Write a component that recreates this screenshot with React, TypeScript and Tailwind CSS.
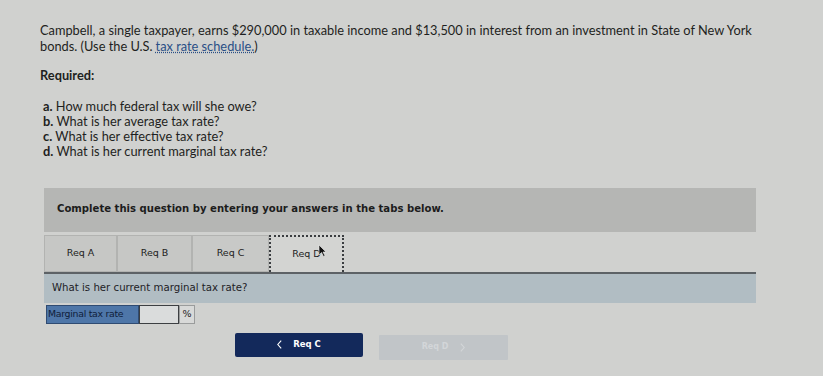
import React from "react";

export default function App() {
  return (
    <div className="w-[823px] h-[376px] overflow-hidden bg-[#d0d1cf] relative" style={{ fontFamily: "Lato, 'Open Sans', sans-serif" }}>
      <div className="pl-[40px] pt-[23px] text-[12.8px] leading-[15.5px] text-[#1e1f21] w-[770px]">
        <div>Campbell, a single taxpayer, earns $290,000 in taxable income and $13,500 in interest from an investment in State of New York</div>
        <div className="flex gap-[3px]">
          <span>bonds. (Use the U.S.</span>
          <span><span className="text-[#2a4f86] underline decoration-dotted underline-offset-1">tax rate schedule.</span>)</span>
        </div>
        <p className="font-bold mt-[14px]">Required:</p>
        <ul className="mt-[15px] leading-[15px] pl-[3px]">
          <li><b>a.</b> How much federal tax will she owe?</li>
          <li><b>b.</b> What is her average tax rate?</li>
          <li><b>c.</b> What is her effective tax rate?</li>
          <li><b>d.</b> What is her current marginal tax rate?</li>
        </ul>
      </div>

      <div className="ml-[44px] mt-[29px] w-[712px]" style={{ fontFamily: "'DejaVu Sans', Verdana, sans-serif" }}>
        <div className="bg-[#b5b6b4] h-[44px] flex items-center pl-[13px] pb-[1px]">
          <span className="font-bold text-[10.1px] text-[#1c1c1c]">Complete this question by entering your answers in the tabs below.</span>
        </div>
        <div className="flex mt-[3px] h-[39px] border-b-2 border-[#5d6266]">
          <div className="w-[73px] bg-[#c6c7c5] border border-[#b2b3b1] flex items-center justify-center text-[9.5px] text-[#222]">Req A</div>
          <div className="w-[75px] bg-[#c6c7c5] border border-[#b2b3b1] flex items-center justify-center text-[9.5px] text-[#222]">Req B</div>
          <div className="w-[77px] bg-[#c8c9c7] border border-[#b2b3b1] flex items-center justify-center text-[9.5px] text-[#222]">Req C</div>
          <div className="w-[75px] bg-[#d3d4d2] border-2 border-dotted border-[#3a3d40] border-b-0 flex items-center justify-center text-[9.5px] text-[#222] relative">
            Req D
            <svg className="absolute left-[47px] top-[7px]" width="9" height="13" viewBox="0 0 9 13">
              <path d="M1 1 L1 11 L3.5 8.5 L5.5 12.5 L7 11.8 L5 8 L8 8 Z" fill="#111" stroke="#eee" strokeWidth="0.6" />
            </svg>
          </div>
        </div>
        <div className="bg-[#b1bdc3] h-[29px] flex items-center pl-[8px] text-[10.2px] text-[#1e2226]">
          What is her current marginal tax rate?
        </div>
        <div className="flex mt-[2px] ml-[2px] h-[19px] text-[9.4px]">
          <div className="w-[93px] bg-[#4e76a8] border border-[#2f4b72] flex items-center pl-[1px] text-[#10203a] tracking-[-0.3px]">Marginal tax rate</div>
          <div className="w-[40px] bg-[#dadcdc] border border-[#3c3f42]"></div>
          <div className="w-[16px] bg-[#d8d9d8] border border-[#9a9c9c] flex items-center justify-center text-[9.5px] text-[#222]">%</div>
        </div>
      </div>

      <div className="flex ml-[235px] mt-[9px] gap-[16px] items-start" style={{ fontFamily: "'DejaVu Sans', Verdana, sans-serif" }}>
        <div className="w-[128px] h-[24px] bg-[#13295b] rounded-[2px] flex items-center justify-center gap-[11px] text-white text-[8.5px] font-bold">
          <svg width="5" height="9" viewBox="0 0 5 9">
            <path d="M4.2 0.6 L0.8 4.5 L4.2 8.4" fill="none" stroke="#ffffff" strokeWidth="1.1" />
          </svg>
          <span>Req C</span>
        </div>
        <div className="w-[129px] h-[25px] mt-[2px] bg-[#c1c5c8] rounded-[1px] flex items-center justify-center gap-[12px] text-[#d3d6d9] text-[8px] font-bold">
          <span>Req D</span>
          <svg width="5" height="9" viewBox="0 0 5 9">
            <path d="M0.8 0.6 L4.2 4.5 L0.8 8.4" fill="none" stroke="#d3d6d9" strokeWidth="1.1" />
          </svg>
        </div>
      </div>
    </div>
  );
}
